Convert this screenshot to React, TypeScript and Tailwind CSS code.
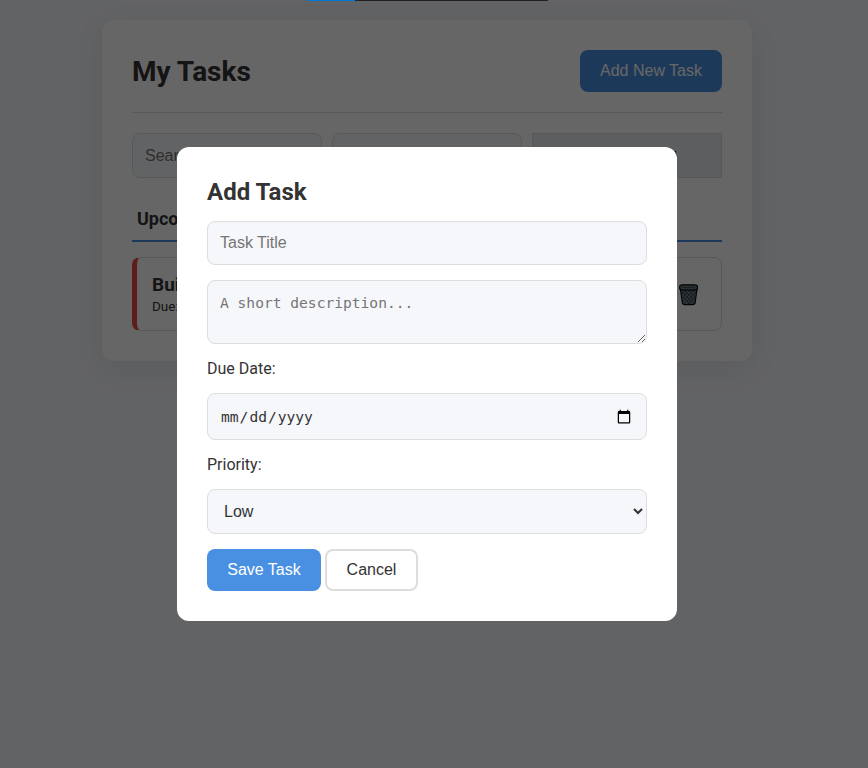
import React from "react";

const field =
  "block w-full rounded-lg border border-[#dddddd] bg-[#f5f7fb] text-base text-[#333333] outline-none placeholder:text-[#757575]";
const arial = "font-['Liberation_Sans',Arial,sans-serif]";
const mono = "font-['DejaVu_Sans_Mono',monospace]";

function TrashIcon() {
  return (
    <svg className="mt-0.5" width="20" height="22" viewBox="0 0 20 22" fill="none">
      <path d="M1.400 5 L3.300 18.500 Q3.500 20.600 6 20.600 H13.500 Q16 20.600 16.200 18.500 L18 5 Z" fill="#6b7d87" stroke="#0a0a0a" strokeWidth="1.200" />
      <path d="M3 8 L15 20 M4 13 L11 20 M6 7 L16 17 M10 7 L17 14 M14 7 L17 10 M17 8 L5 20 M16 13 L9 20 M14 7 L4 17 M10 7 L3 14 M6 7 L3 10" stroke="#33434b" strokeWidth="0.800" />
      <rect x="0.600" y="0.800" width="17.900" height="5.300" rx="2.650" fill="#6b7d87" stroke="#0a0a0a" strokeWidth="1.200" />
      <path d="M3 3.500 H16 M5 2.500 L7 4.500 M9 2.500 L11 4.500 M13 2.500 L15 4.500" stroke="#33434b" strokeWidth="0.700" />
    </svg>
  );
}

function TaskBoard() {
  return (
    <main className="mx-auto h-[341px] w-[650px] rounded-xl bg-white p-[30px] shadow-[0_8px_30px_rgba(0,0,0,0.08)]">
      <header className="flex h-[63px] items-start justify-between border-b border-[#dddddd]">
        <h1 className="mt-[5px] text-[28px] leading-[33px] font-bold">My Tasks</h1>
        <button className={`h-[42px] rounded-lg bg-[#4a90e2] px-5 text-base text-white ${arial}`}>Add New Task</button>
      </header>
      <div className="mt-5 grid grid-cols-3 gap-[10px]">
        <input className={`${field} ${arial} h-[45px] px-3`} placeholder="Search tasks..." />
        <select className={`${field} ${arial} h-[45px] px-3`}>
          <option>All Priorities</option>
        </select>
        <button className={`h-[45px] border border-[#dddddd] bg-[#e8eaed] text-[13.333px] text-black ${arial}`}>Clear Completed</button>
      </div>
      <h2 className="mt-[29px] h-[35px] border-b-2 border-[#4a90e2] pl-[5px] text-[18px] leading-[24px] font-bold">Upcoming</h2>
      <article className="mt-[15px] flex h-[74px] items-center justify-between rounded-lg border border-l-[5px] border-[#dddddd] border-l-[#e74c3c] pr-[22px] pl-[15px]">
        <div className="pt-[3px]">
          <h3 className="text-[19px] leading-[22px] font-bold">Build Project</h3>
          <p className="text-[13.500px] leading-[21px]">Due: Tomorrow</p>
        </div>
        <TrashIcon />
      </article>
    </main>
  );
}

function AddTaskDialog() {
  return (
    <section role="dialog" aria-label="Add Task" className="h-[474px] w-[500px] rounded-xl bg-white p-[30px]">
      <h2 className="pt-px text-2xl leading-[28px] font-bold">Add Task</h2>
      <input className={`${field} ${arial} mt-[15px] h-[44px] px-3`} placeholder="Task Title" />
      <textarea
        className={`${field} ${mono} mt-[15px] h-16 resize-y px-3 py-3 text-[14.600px] leading-[19px]`}
        placeholder="A short description..."
      />
      <label className="mt-[15px] block leading-[19px]">Due Date:</label>
      <input
        type="date"
        className={`${field} ${mono} mt-[15px] h-[47px] pr-[14px] pl-3 text-[14.600px] [&::-webkit-calendar-picker-indicator]:mt-px [&::-webkit-calendar-picker-indicator]:mr-[-2px] [&::-webkit-calendar-picker-indicator]:h-4 [&::-webkit-calendar-picker-indicator]:w-4`}
      />
      <label className="mt-[15px] block leading-[19px]">Priority:</label>
      <select className={`${field} ${arial} mt-[15px] h-[45px] pl-3`}>
        <option>Low</option>
        <option>Medium</option>
        <option>High</option>
      </select>
      <div className={`mt-[15px] flex gap-1 text-base ${arial}`}>
        <button className="h-[42px] w-[114px] rounded-lg bg-[#4a90e2] text-white">Save Task</button>
        <button className="h-[42px] w-[93px] rounded-lg border-2 border-[#dddddd] bg-white">Cancel</button>
      </div>
    </section>
  );
}

export default function App() {
  return (
    <div className="h-screen overflow-hidden bg-[#f5f7fb] pt-5 pr-[14px] font-[Roboto,sans-serif] text-[#333333]">
      <TaskBoard />
      <div className="fixed inset-0 flex items-center justify-center bg-black/60 pr-[14px]">
        <AddTaskDialog />
      </div>
      <div className="fixed top-0 left-[307px] flex h-px w-[241px] bg-[#202124]">
        <div className="w-12 bg-[#0078d7]" />
      </div>
    </div>
  );
}
